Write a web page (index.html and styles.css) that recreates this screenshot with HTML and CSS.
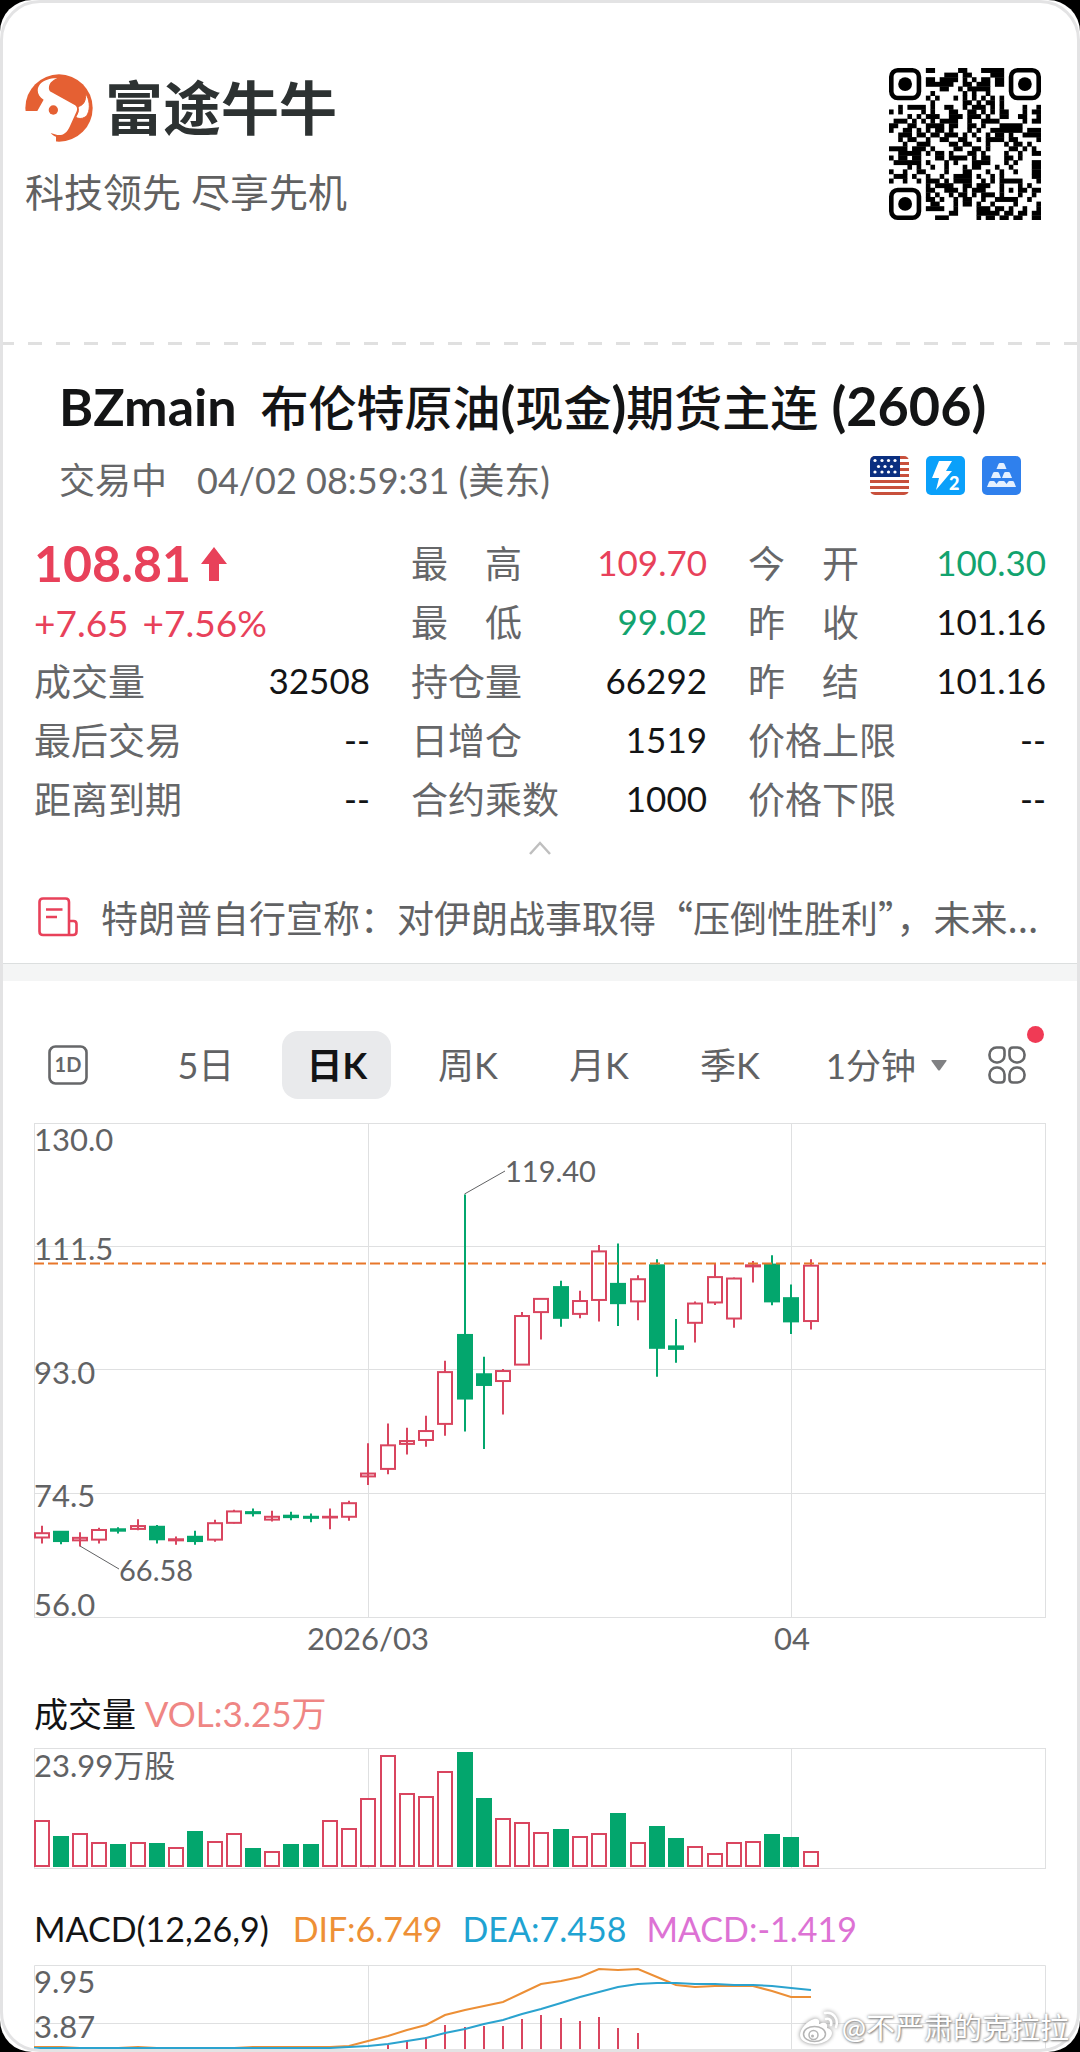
FILE: index.html
```html
<!DOCTYPE html>
<html lang="zh-CN">
<head>
<meta charset="utf-8">
<meta name="viewport" content="width=device-width, initial-scale=1">
<title>BZmain 布伦特原油(现金)期货主连 (2606)</title>
<link rel="stylesheet" href="styles.css">
</head>
<body>
<div class="sheet">
<main class="frame">
  <header class="header">
    <div class="brand">
      <div class="brand-row">
        <svg class="brand-logo" viewBox="75 222 204 204" aria-hidden="true">
          <circle cx="177" cy="324" r="101" fill="#e56033"/>
          <path fill="#fff" d="M70 333H112L131 299C112 289 108 268 120 253C132 239 155 234 172 235C153 242 145 254 147 268C148 273 151 275 155 277L224 315C231 319 233 326 230 334L209 380C200 399 189 407 172 405L152 399C158 406 163 409 168 410V430H70Z"/>
          <path fill="#fff" stroke="#e56033" stroke-width="3" d="M257 281C268 297 272 324 263 342C257 355 240 359 227 352L232 342C236 334 236 327 234 320C250 316 258 304 257 281Z"/>
          <circle cx="160" cy="330" r="14" fill="#e56033"/>
        </svg>
        <span class="brand-name">富途牛牛</span>
      </div>
      <p class="slogan">科技领先 尽享先机</p>
    </div>
    <svg class="qr" id="qr" viewBox="0 0 33 33" role="img" aria-label="二维码"></svg>
  </header>
  <div class="perforation"></div>

  <section class="quote">
    <div class="quote-head">
      <h1 class="title"><span class="code">BZmain</span>布伦特原油<b>(</b>现金<b>)</b>期货主连<b> (2606)</b></h1>
      <div class="status-row">
        <p class="status"><span>交易中</span><time>04/02 08:59:31 (美东)</time></p>
        <div class="badges">
          <svg class="badge" viewBox="0 0 39 39" role="img" aria-label="美国">
            <defs><clipPath id="flagClip"><rect width="39" height="39" rx="5"/></clipPath></defs>
            <g clip-path="url(#flagClip)">
              <rect width="39" height="39" fill="#fff"/>
              <path stroke="#c8503c" stroke-width="3" d="M0 1.5H39M0 7.5H39M0 13.500H39M0 19.500H39M0 25.500H39M0 31.500H39M0 37.500H39"/>
              <rect width="30" height="21" fill="#0a2f80"/>
              <g fill="#fff"><circle cx="5" cy="4.500" r="1.600"/><circle cx="12" cy="4.500" r="1.600"/><circle cx="18.500" cy="4.500" r="1.600"/><circle cx="25" cy="4.500" r="1.600"/><circle cx="8.500" cy="10.500" r="1.600"/><circle cx="15" cy="10.500" r="1.600"/><circle cx="21.500" cy="10.500" r="1.600"/><circle cx="5" cy="16" r="1.600"/><circle cx="12" cy="16" r="1.600"/><circle cx="18.500" cy="16" r="1.600"/><circle cx="25" cy="16" r="1.600"/></g>
            </g>
          </svg>
          <svg class="badge" viewBox="0 0 39 39" role="img" aria-label="LV2 行情">
            <rect width="39" height="39" rx="5" fill="#0aa0fa"/>
            <path fill="#fff" d="M13 5H26L20 15H26L10 34L13 22H6Z"/>
            <text x="23" y="34" class="badge-num">2</text>
          </svg>
          <svg class="badge" viewBox="0 0 39 39" role="img" aria-label="期货">
            <rect width="39" height="39" rx="5" fill="#2f80ed"/>
            <g fill="#e4f0ff"><path d="M14.500 13L16.500 8Q17 7 18 7H21Q22 7 22.500 8L24.500 13Z"/><path d="M9 22L11 17Q11.500 16 12.500 16H15.500Q16.500 16 17 17L19 22Z"/><path d="M20 22L22 17Q22.500 16 23.500 16H26.500Q27.500 16 28 17L30 22Z"/><path d="M5 31L7 26Q7.500 25 8.500 25H11.500Q12.500 25 13 26L14.500 28L16 26Q16.500 25 17.500 25H21.500Q22.500 25 23 26L24.500 28L26 26Q26.500 25 27.500 25H30.500Q31.500 25 32 26L34 31Z"/></g>
          </svg>
        </div>
      </div>
    </div>

    <div class="stats">
      <dl class="col">
        <div class="price up">108.81
          <svg class="arrow" viewBox="0 0 26 34" aria-hidden="true"><path fill="currentColor" d="M13 0L26 17H18V34H8V17H0Z"/></svg>
        </div>
        <div class="change up"><span>+7.65</span><span>+7.56%</span></div>
        <div class="row"><dt>成交量</dt><dd>32508</dd></div>
        <div class="row"><dt>最后交易</dt><dd>--</dd></div>
        <div class="row"><dt>距离到期</dt><dd>--</dd></div>
      </dl>
      <dl class="col">
        <div class="row"><dt>最　高</dt><dd class="up">109.70</dd></div>
        <div class="row"><dt>最　低</dt><dd class="down">99.02</dd></div>
        <div class="row"><dt>持仓量</dt><dd>66292</dd></div>
        <div class="row"><dt>日增仓</dt><dd>1519</dd></div>
        <div class="row"><dt>合约乘数</dt><dd>1000</dd></div>
      </dl>
      <dl class="col">
        <div class="row"><dt>今　开</dt><dd class="down">100.30</dd></div>
        <div class="row"><dt>昨　收</dt><dd>101.16</dd></div>
        <div class="row"><dt>昨　结</dt><dd>101.16</dd></div>
        <div class="row"><dt>价格上限</dt><dd>--</dd></div>
        <div class="row"><dt>价格下限</dt><dd>--</dd></div>
      </dl>
    </div>

    <button class="collapse" type="button" aria-label="收起">
      <svg viewBox="0 0 24 16" width="24" height="16"><path fill="none" stroke="#bfbfbf" stroke-width="2.500" d="M2 14L12 3L22 14"/></svg>
    </button>

    <a class="news" href="#">
      <svg class="news-icon" viewBox="0 0 40 40" aria-hidden="true">
        <g fill="none" stroke="#e8415a" stroke-width="2.600"><path d="M31 38H5Q1.500 38 1.500 34.500V5Q1.500 1.500 5 1.500H27.500Q31 1.500 31 5V38H35Q38.500 38 38.500 34.500V27Q38.500 24 35.500 24H31"/><path d="M8 12.500H24.500M8 20H19"/></g>
      </svg>
      <span class="news-text">特朗普自行宣称：对伊朗战事取得“压倒性胜利”，未来...</span>
    </a>
  </section>

  <div class="band"></div>

  <section class="charts">
    <nav class="tabs" aria-label="周期">
      <button class="icon-btn" type="button" aria-label="1D">
        <svg viewBox="0 0 40 40" width="40" height="40"><rect x="1.500" y="1.500" width="37" height="37" rx="6" fill="none" stroke="#666769" stroke-width="2.600"/><text x="20" y="27" text-anchor="middle" class="one-d">1D</text></svg>
      </button>
      <div class="tab-group">
        <button class="tab" type="button">5日</button>
        <button class="tab active" type="button">日K</button>
        <button class="tab" type="button">周K</button>
        <button class="tab" type="button">月K</button>
        <button class="tab" type="button">季K</button>
      </div>
      <label class="minutes">
        <select aria-label="分钟周期"><option>1分钟</option></select>
        <svg viewBox="0 0 16 11" width="16" height="11" aria-hidden="true"><path fill="#808183" d="M1 0H15Q16 0 15.500 1L9 10Q8 11 7 10L.5 1Q0 0 1 0Z"/></svg>
      </label>
      <button class="icon-btn more" type="button" aria-label="更多指标">
        <svg viewBox="0 0 38 38" width="38" height="38"><g fill="none" stroke="#666769" stroke-width="2.600"><path d="M8.500 1.500H13Q16.500 1.500 16.500 5V9.500A7 7 0 0 1 9.500 16.500H8.500A7 7 0 0 1 1.500 9.500V8.500A7 7 0 0 1 8.500 1.500Z"/><path d="M29.500 1.500H25Q21.500 1.500 21.500 5V9.500A7 7 0 0 0 28.500 16.500H29.500A7 7 0 0 0 36.500 9.500V8.500A7 7 0 0 0 29.500 1.500Z"/><path d="M8.500 36.500H13Q16.500 36.500 16.500 33V28.500A7 7 0 0 0 9.500 21.500H8.500A7 7 0 0 0 1.500 28.500V29.500A7 7 0 0 0 8.500 36.500Z"/><path d="M29.500 36.500H25Q21.500 36.500 21.500 33V28.500A7 7 0 0 1 28.500 21.500H29.500A7 7 0 0 1 36.500 28.500V29.500A7 7 0 0 1 29.500 36.500Z"/></g></svg>
        <span class="dot"></span>
      </button>
    </nav>

    <svg class="plot k-plot" viewBox="0 0 1012 542" role="img" aria-label="日K线">
      <g class="grid"><rect x="0.500" y="1.500" width="1011" height="494"/><path d="M0 124.500H1012M0 247.500H1012M0 371.500H1012M334.500 1V496M757.500 1V496"/></g>
      <g id="candles"></g>
      <path class="last-price" d="M0 141.500H1012"/>
      <path class="leader" d="M430.500 72L471 49M46 424L85 447"/>
      <g class="axis">
        <text x="0" y="29">130.0</text><text x="0" y="138">111.5</text><text x="0" y="262">93.0</text><text x="0" y="385">74.5</text><text x="0" y="494">56.0</text>
        <text x="334" y="528" text-anchor="middle">2026/03</text><text x="758" y="528" text-anchor="middle">04</text>
      </g>
      <g class="note"><text x="471" y="60">119.40</text><text x="85" y="459">66.58</text></g>
    </svg>

    <h2 class="legend">成交量 <span class="vol">VOL:3.25万</span></h2>
    <svg class="plot" viewBox="0 0 1012 121" role="img" aria-label="成交量">
      <g class="grid"><rect x="0.500" y="0.500" width="1011" height="120"/><path d="M334.500 0V121M757.500 0V121"/></g>
      <g id="volume"></g>
      <g class="axis"><text x="0" y="29">23.99万股</text></g>
    </svg>

    <h2 class="legend macd-legend"><span class="name">MACD(12,26,9)</span><span class="dif">DIF:6.749</span><span class="dea">DEA:7.458</span><span class="macd">MACD:-1.419</span></h2>
    <svg class="plot" viewBox="0 0 1012 84" role="img" aria-label="MACD">
      <g class="grid"><path d="M0.500 84V0.500H1011.500V84M0 58.500H1012M334.500 0V84M757.500 0V84"/></g>
      <g id="macd"></g>
      <g class="axis"><text x="0" y="28">9.95</text><text x="0" y="73">3.87</text></g>
    </svg>
  </section>
</main>
<div class="watermark">
  <svg viewBox="0 0 40 34" width="40" height="34" aria-hidden="true">
    <path fill="#fff" d="M15 8C8 10 1 18 1 24C1 30 9 33 16 33C26 33 33 27 33 22C33 19 30 17.500 28 17C29 13 27 10 20 13C21 9 19 7 15 8Z"/>
    <ellipse cx="15.500" cy="23" rx="11" ry="7.500" fill="none" stroke="#b5b5b5" stroke-width="1.500"/>
    <circle cx="14.500" cy="24" r="4.500" fill="none" stroke="#b5b5b5" stroke-width="1.500"/><circle cx="13.500" cy="25" r="1.500" fill="#b5b5b5"/>
    <path fill="none" stroke="#fff" stroke-width="2.500" stroke-linecap="round" d="M26 2C34 0 40 8 37 16M27 8C31 7 33 10 32 14"/>
  </svg>
  <span>@不严肃的克拉拉</span>
</div>
</div>
<script src="charts.js"></script>
</body>
</html>
```
FILE: styles.css
```css
* { box-sizing: border-box; }

body {
  margin: 0;
  background: #000;
  color: #131415;
  font-family: Lato, "Noto Sans CJK SC", sans-serif;
  font-size: 36px;
}

h1, h2, p, dl, dd { margin: 0; font-weight: 400; }

button, select {
  margin: 0;
  padding: 0;
  border: 0;
  background: none;
  color: inherit;
  font: inherit;
}

svg { display: block; }

.sheet {
  position: relative;
  background: #fff;
  border-radius: 32px;
  overflow: hidden;
}

.frame {
  border: 3px solid #e3e3e4;
  border-radius: 40px;
  overflow: hidden;
}

.up { color: #e8415a; }
.down { color: #12a36e; }

/* Brand header */
.header {
  display: flex;
  justify-content: space-between;
  align-items: flex-start;
  padding: 65px 36px 122px 22px;
}
.brand { padding-top: 6px; }
.brand-row { display: flex; align-items: center; gap: 12px; }
.brand-logo { width: 68px; height: 68px; }
.brand-name {
  color: #2d3232;
  font-size: 58px;
  font-weight: 700;
  line-height: 68px;
}
.slogan { margin-top: 24px; color: #616161; font-size: 39px; line-height: 52px; }
.qr { width: 152px; height: 152px; fill: #000; }
.perforation {
  height: 3px;
  background: repeating-linear-gradient(90deg, #e0e0e0 0 14px, transparent 14px 28px);
  background-position: -3px 0;
}

/* Quote */
.quote { padding: 35px 31px 18px; }
.quote-head { padding: 0 25px; }
.title { font-size: 48px; font-weight: 500; line-height: 56px; white-space: nowrap; }
.code { margin-right: 24px; font-size: 52px; font-weight: 700; line-height: 40px; }
.title b { font-size: 54px; font-weight: 700; line-height: 40px; }
.status-row {
  display: flex;
  justify-content: space-between;
  align-items: flex-start;
  margin-top: 20px;
}
.status { display: flex; gap: 30px; color: #666769; line-height: 48px; }
.badges { display: flex; gap: 17px; }
.badge { width: 39px; height: 39px; }
.badge-num { fill: #fff; font-size: 18px; font-weight: 900; }

.stats {
  display: grid;
  grid-template-columns: 336fr 296fr 298fr;
  gap: 41px;
  margin-top: 30px;
  line-height: 59px;
}
.row { display: flex; justify-content: space-between; }
dt { color: #666769; font-size: 37px; }
dd { font-size: 35px; line-height: 56px; }
.price { display: flex; align-items: center; gap: 10px; font-size: 50px; font-weight: 700; }
.arrow { width: 26px; height: 34px; }
.change { display: flex; gap: 14px; font-size: 37px; }

.collapse { display: block; margin: 11px auto 0; }
.news { display: flex; align-items: center; gap: 23px; margin-top: 33px; padding-left: 4px; color: #616264; text-decoration: none; }
.news-icon { flex: none; width: 40px; height: 40px; }
.news-text { overflow: hidden; font-size: 37px; line-height: 56px; white-space: nowrap; font-family: "Noto Sans CJK SC", sans-serif; }

.band { height: 18px; border-top: 1px solid #dcdfdf; background: #f4f5f5; }

/* Charts */
.charts { padding: 50px 31px 0; }
.tabs { display: flex; justify-content: space-between; align-items: center; padding: 0 20px 0 14px; color: #616264; }
.icon-btn { position: relative; }
.one-d { fill: #666769; font-size: 20px; font-weight: 700; }
.tab-group { display: flex; gap: 22px; padding-left: 22px; }
.tab { width: 109px; height: 68px; border-radius: 16px; line-height: 68px; }
.tab.active { background: #e9eaec; color: #131415; font-weight: 700; }
.minutes { display: flex; align-items: center; gap: 14px; font-size: 35px; }
.minutes select { appearance: none; }
.dot { position: absolute; top: -20px; right: -18px; width: 17px; height: 17px; border-radius: 50%; background: #f03a55; }

.plot { width: 100%; height: auto; overflow: visible; }
.k-plot { margin-top: 23px; }
.grid { fill: none; stroke: #dfe0e1; stroke-width: 1; }
.axis { fill: #616264; font-size: 31px; }
.note { fill: #616264; font-size: 29px; }
.leader { fill: none; stroke: #616264; stroke-width: 1; }
.last-price { stroke: #e8772a; stroke-width: 2; stroke-dasharray: 10 4; }
.rise { fill: none; stroke: #d9455f; stroke-width: 2; }
.fall { fill: #03a66d; stroke: #03a66d; stroke-width: 2; }
.rise-body { fill: #fff; stroke: #d9455f; stroke-width: 2; }
.line-dif { fill: none; stroke: #ec8f36; stroke-width: 2; }
.line-dea { fill: none; stroke: #2ba3cf; stroke-width: 2; }

.legend { margin-top: 30px; margin-bottom: 14px; font-size: 34px; line-height: 40px; }
.vol { color: #ef8684; font-size: 35px; line-height: 32px; }
.macd-legend { display: flex; gap: 20px; margin-top: 40px; margin-bottom: 16px; white-space: nowrap; }
.macd-legend .name { margin-right: 4px; }
.dif { color: #ee9036; }
.dea { color: #1fa3d2; }
.macd { color: #dd72d4; }

.watermark {
  position: absolute;
  right: 11px;
  bottom: 6px;
  display: flex;
  align-items: center;
  gap: 3px;
  color: #fff;
  font-size: 29px;
  line-height: 36px;
  text-shadow: 0 0 3px #777, 1px 1px 2px #999;
}
.watermark svg { filter: drop-shadow(0 0 2px #888); }
```
FILE: charts.js
```js
const NS = 'http://www.w3.org/2000/svg';

function add(parent, tag, attrs) {
  const el = document.createElementNS(NS, tag);
  for (const key in attrs) el.setAttribute(key, attrs[key]);
  parent.appendChild(el);
}

const STEP = 19.23;
const START = 7.5;
const centre = i => Math.round(START + STEP * i);

// Each candle: direction, high, body top, body bottom, low.
// Levels are measured down the price axis, 36 at 130.0 and 1419 at 56.0.
const candles = `r 1162 1183 1195 1212,g 1177 1179 1205 1214,r 1180 1196 1203 1220,r 1168 1174 1201 1212,g 1166 1172 1176 1184,r 1144 1163 1171 1175,g 1160 1165 1200 1212,r 1192 1200 1203 1215,g 1176 1193 1205 1215,r 1145 1155 1201 1207,r 1117 1122 1154 1156,g 1114 1124 1127 1136,r 1120 1137 1145 1150,g 1123 1134 1138 1147,g 1128 1137 1140 1152,r 1114 1137 1139 1172,r 1092 1099 1137 1148,r 931 1016 1024 1048,r 876 937 1003 1018,r 888 925 933 963,r 854 897 922 941,r 700 732 877 910,g 235 628 806 898,g 689 738 768 947,r 723 729 757 851,r 564 575 711 712,r 525 527 564 641,g 476 494 580 605,r 504 533 569 581,r 376 394 530 590,g 372 485 539 603,r 461 472 534 587,g 416 433 664 745,g 583 660 667 706,r 534 540 594 649,r 429 466 537 544,r 467 470 582 608,r 421 433 436 481,g 405 431 534 545,g 487 525 590 625,r 416 434 589 613`
  .split(',').map(s => s.split(' '));
const level = v => 1.5 + (v - 36) * 494 / 1383;

const k = document.getElementById('candles');
candles.forEach(([dir, ...v], i) => {
  const [high, top, bottom, low] = v.map(level);
  const x = centre(i);
  const cls = dir === 'r' ? 'rise' : 'fall';
  add(k, 'path', { class: cls, d: `M${x} ${high}V${low}` });
  const left = Math.max(x - 7, 1);
  add(k, 'rect', {
    class: dir === 'r' && bottom - top > 4 ? 'rise-body' : cls,
    x: left, y: top, width: x + 7 - left, height: Math.max(bottom - top, 0.5)
  });
});

// Volume bar heights, in thirds of a unit of the 120-unit plot.
const volumes = [139, 91, 99, 71, 67, 71, 70, 57, 105, 75, 98, 54, 46, 66, 67, 137, 114, 205, 334, 220, 211, 286, 343, 205, 143, 131, 101, 111, 89, 98, 160, 73, 121, 85, 61, 38, 73, 75, 96, 86, 45];
const vol = document.getElementById('volume');
volumes.forEach((v, i) => {
  const x = centre(i);
  const left = Math.max(x - 7, 1);
  const h = Math.round(v / 3);
  add(vol, 'rect', {
    class: candles[i][0] === 'r' ? 'rise-body' : 'fall',
    x: left, y: 119 - h, width: x + 7 - left, height: h - 1
  });
});

const dif = [82, 82, 83, 83, 83, 82, 83, 83, 83, 83, 83, 82, 82, 82, 82, 82, 81, 76, 71, 65, 60, 50, 45, 41, 37, 28, 19, 16, 12, 4, 5, 4, 12, 20, 22, 21, 21, 21, 26, 32, 32];
const dea = [83, 83, 83, 83, 83, 83, 83, 83, 83, 83, 83, 83, 83, 83, 83, 83, 82, 81, 79, 76, 73, 68, 64, 59, 55, 49, 44, 38, 32, 27, 22, 19, 18, 18, 19, 19, 20, 20, 21, 23, 25];
const bars = [80, 76, 72, 60, 62, 61, 61, 54, 50, 53, 56, 52, 63, 68];
const macd = document.getElementById('macd');
bars.forEach((y, i) => add(macd, 'path', { class: 'rise', d: `M${centre(i + 18)} ${y}V84` }));
const points = list => list.map((y, i) => `${i ? centre(i) : 0},${y}`).join(' ');
add(macd, 'polyline', { class: 'line-dif', points: points(dif) });
add(macd, 'polyline', { class: 'line-dea', points: points(dea) });

const modules = [
  '........##.....##...#####........',
  '............###.##....###........',
  '........##.####.#.#.##.##........',
  '........######..##.###.##........',
  '...........##..#.#####...........',
  '.........#......#.#..#...........',
  '........#.#...#.#.#.#.#.#........',
  '.........#......##.#.##.#........',
  '..#.####.#..##..#.###.#.#....#..#',
  '#.#....#.#...##..##.#.#.##...#.##',
  '....#.#.###..###.###.#..##..##..#',
  '.###.#.#.#.####..#..####.....#.##',
  '##..##..####.##..##.#...#####....',
  '#..##.#.#.##.#...#.#..#######.###',
  '..###.##.##.###.#.#..#.##.#..####',
  '..#.##..#..##..##..#.####.##....#',
  '...#..###....##.##...#...#.##.#..',
  '####.###.#....##..##.#....##.#.#.',
  '..#####.#.##.#...##.#....#..#..##',
  '#.##.##...##.####.#.##...##.#....',
  '.######.#...#.#...####...#.#...##',
  '....#.#..#..#...#.##...#..#....##',
  '#..#..##....#...##...#..#..#...##',
  '.###.#..#..#..####.#..#.#......##',
  '#..#..#.###.#.####..#.#.#####...#',
  '........#.####..##.###..#...#.#..',
  '........##..###.#.###...#.#.##.##',
  '........#.#..#.##.#.###.#...#..#.',
  '........##.#..#.##..#..#####..#..',
  '.........##...#.##.#..#....#....#',
  '........####..#....###.##.#..#..#',
  '.............##....#####.##.##.##',
  '..........###......#.##.##.##..##'
];
const qr = document.getElementById('qr');
modules.forEach((line, y) => {
  for (const run of line.matchAll(/#+/g)) {
    add(qr, 'rect', { x: run.index, y, width: run[0].length, height: 1.08 });
  }
});
[[0, 0], [26, 0], [0, 26]].forEach(([x, y]) => {
  add(qr, 'rect', { x: x + 0.5, y: y + 0.5, width: 6, height: 6, rx: 1.4, fill: 'none', stroke: '#000', 'stroke-width': 1 });
  add(qr, 'circle', { cx: x + 3.5, cy: y + 3.5, r: 1.5 });
});
```
